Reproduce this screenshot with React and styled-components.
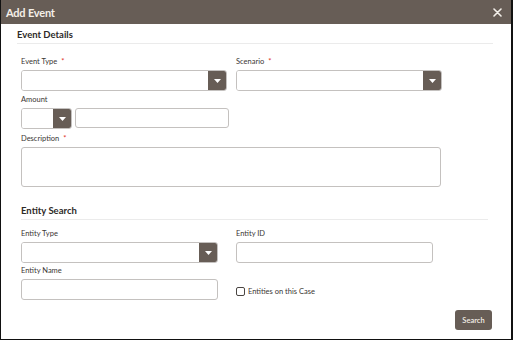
import React from 'react'
import styled, { createGlobalStyle } from 'styled-components';

const GlobalStyle = createGlobalStyle`
  html, body {
    margin: 0;
    padding: 0;
    background: #fff;
  }
  body {
    font-family: Lato, "Liberation Sans", sans-serif;
  }
`;

function Caret() {
    return (
        <svg width="7" height="4" viewBox="0 0 7 4">
            <path d="M0 0 L7 0 L3.5 4 Z" fill="#fff" />
        </svg>
    );
}

function Select({ width }) {
    return (
        <SelectBox style={{ width }}>
            <SelectValue />
            <SelectButton><Caret /></SelectButton>
        </SelectBox>
    );
}

function Label({ children, required }) {
    return (
        <FieldLabel>
            {children}
            {required && <Required>*</Required>}
        </FieldLabel>
    );
}

function App() {
    return (
        <>
        <GlobalStyle />
        <Dialog>
            <Header>
                <Title>Add Event</Title>
                <Close>
                    <svg width="9" height="9" viewBox="0 0 9 9">
                        <path d="M1 1 L8 8 M8 1 L1 8" stroke="#f3efe9" strokeWidth="1.6" strokeLinecap="round" />
                    </svg>
                </Close>
            </Header>

            <Body>
                {/* Event details */}
                <SectionTitle $top={4} $left={0} $line={476}>Event Details</SectionTitle>
                <Fields>
                    <Row $top={13}>
                        <Field>
                            <Label required>Event Type</Label>
                            <Select width={206} />
                        </Field>
                        <Field>
                            <Label required>Scenario</Label>
                            <Select width={206} />
                        </Field>
                    </Row>
                    <Field $top={4}>
                        <Label>Amount</Label>
                        <AmountRow>
                            <Select width={51} />
                            <Input $width={154} $height={20} />
                        </AmountRow>
                    </Field>
                    <Field $top={5}>
                        <Label required>Description</Label>
                        <TextArea />
                    </Field>
                </Fields>

                {/* Entity search */}
                <SectionTitle $top={17} $left={4} $line={467}>Entity Search</SectionTitle>
                <Fields>
                    <Row $top={9}>
                        <Field>
                            <Label>Entity Type</Label>
                            <Select width={197} />
                        </Field>
                        <Field>
                            <Label>Entity ID</Label>
                            <Input $width={197} $height={21} />
                        </Field>
                    </Row>
                    <Row $top={3}>
                        <Field>
                            <Label>Entity Name</Label>
                            <Input $width={197} $height={21} />
                        </Field>
                        <CheckRow>
                            <CheckBox />
                            <CheckLabel>Entities on this Case</CheckLabel>
                        </CheckRow>
                    </Row>
                </Fields>
                <Footer>
                    <SearchButton>Search</SearchButton>
                </Footer>
            </Body>
        </Dialog>
        </>
    );
}

export default App;

const Dialog = styled.div`
    width: 513px;
    height: 340px;
    box-sizing: border-box;
    display: flex;
    flex-direction: column;
    border-left: 1px solid #111;
    border-bottom: 1px solid #111;
    border-right: 2px solid #111;
    background: #fff;
    overflow: hidden;
`;

const Header = styled.div`
    height: 24px;
    background: #675d56;
    display: flex;
    align-items: center;
    justify-content: space-between;
    padding: 0 9px 0 5px;
    flex-shrink: 0;
`;

const Title = styled.div`
    color: #f4efe8;
    font-weight: 700;
    font-size: 11px;
    letter-spacing: -0.2px;
`;

const Close = styled.div`
    display: flex;
    align-items: center;
`;

const Body = styled.div`
    padding: 0 0 0 16px;
    display: flex;
    flex-direction: column;
`;

const SectionTitle = styled.div`
    margin-top: ${p => p.$top}px;
    margin-left: ${p => p.$left}px;
    width: ${p => p.$line}px;
    font-size: 9.5px;
    font-weight: 700;
    color: #2d2a28;
    line-height: 14px;
    padding-bottom: 1px;
    border-bottom: 1px solid #ebebeb;
`;

const Fields = styled.div`
    padding-left: 4px;
    display: flex;
    flex-direction: column;
`;

const Row = styled.div`
    display: grid;
    grid-template-columns: 215px auto;
    margin-top: ${p => p.$top}px;
`;

const Field = styled.div`
    display: flex;
    flex-direction: column;
    margin-top: ${p => p.$top || 0}px;
`;

const FieldLabel = styled.div`
    font-size: 7.5px;
    color: #3a3633;
    line-height: 10px;
    height: 10px;
    margin-bottom: 3px;
`;

const Required = styled.span`
    color: #e0341f;
    margin-left: 4px;
`;

const SelectBox = styled.div`
    display: flex;
    height: 21px;
    box-sizing: border-box;
    border: 1px solid #c4c1bf;
    border-radius: 3px;
    overflow: hidden;
`;

const SelectValue = styled.div`
    flex: 1;
    background: #fff;
`;

const SelectButton = styled.div`
    width: 18px;
    background: #675d56;
    display: flex;
    align-items: center;
    justify-content: center;
`;

const AmountRow = styled.div`
    display: flex;
    gap: 3px;
    height: 21px;
`;

const Input = styled.div`
    width: ${p => p.$width}px;
    height: ${p => p.$height}px;
    box-sizing: border-box;
    border: 1px solid #c4c1bf;
    border-radius: 3px;
    background: #fff;
`;

const TextArea = styled.div`
    width: 420px;
    height: 40px;
    box-sizing: border-box;
    border: 1px solid #c4c1bf;
    border-radius: 3px;
`;

const CheckRow = styled.div`
    display: flex;
    align-items: center;
    gap: 3px;
    align-self: end;
    margin-bottom: 4px;
`;

const CheckBox = styled.div`
    width: 9px;
    height: 9px;
    box-sizing: border-box;
    border: 1px solid #4a4542;
    border-radius: 2px;
`;

const CheckLabel = styled.span`
    font-size: 7.5px;
    color: #3a3633;
`;

const Footer = styled.div`
    display: flex;
    justify-content: flex-end;
    width: 475px;
    margin-top: 10px;
`;

const SearchButton = styled.div`
    width: 37px;
    height: 20px;
    background: #675d56;
    border-radius: 3px;
    color: #f4efe8;
    font-size: 7.5px;
    font-weight: 600;
    display: flex;
    align-items: center;
    justify-content: center;
`;
